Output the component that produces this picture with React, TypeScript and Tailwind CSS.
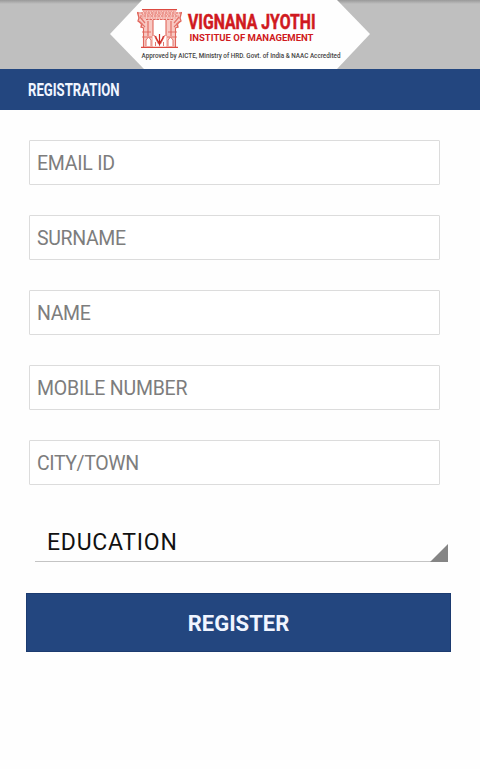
const fields = [
  { id: 'email', label: 'EMAIL ID', type: 'email', tracking: 'tracking-[-0.25px]' },
  { id: 'surname', label: 'SURNAME', type: 'text', tracking: 'tracking-[-0.35px]' },
  { id: 'name', label: 'NAME', type: 'text', tracking: 'tracking-[-0.35px]' },
  { id: 'mobile', label: 'MOBILE NUMBER', type: 'tel', tracking: 'tracking-[-0.22px]' },
  { id: 'city', label: 'CITY/TOWN', type: 'text', tracking: 'tracking-[-0.4px]' },
];

function Emblem() {
  return (
    <g transform="translate(137 9)" fill="none" stroke="#e0665c">
      {/* lintel and pillar bodies */}
      <path d="M5 0H40L39 3H44.5L41 19L38 17V38H29V11H16V38H7V17L4 19L0 3H6Z" fill="#f8c9c3" stroke="none" />
      <path d="M5 0.6H40" strokeWidth="1.2" stroke="#dc4a41" />
      <path d="M0 4H45M3 7H42M9 10.5H36" strokeWidth="1" strokeDasharray="2.5 1" />
      <path d="M6 2.3H39M5 5.5H40M5 9H40" stroke="#ee9289" strokeWidth="1" strokeDasharray="1.5 1" />
      {/* brackets */}
      <path d="M0.5 3L2 9L1 12L5 15L4 18L7 19M44.5 3L43 9L44 12L40 15L41 18L38 19" strokeWidth="1.3" />
      <path d="M3 8L8 14M42 8L37 14M2 12L8 18M43 12L37 18" stroke="#e4736a" strokeWidth="1.2" />
      {/* pillars */}
      <path d="M6.5 19V38M11 12V27M16 11V27M29 11V27M34 12V27M38.5 19V38" strokeWidth="1.1" />
      <path d="M5 23H14M31 23H40M5 28H15M30 28H40" strokeWidth="0.9" />
      <path d="M9 37V31L11.5 28L14 31V37M31 37V31L33.5 28L36 31V37" strokeWidth="0.9" fill="#fff" />
      <path d="M4 38.3H41" strokeWidth="1.2" stroke="#dc4a41" />
      {/* opening with the sprout */}
      <path d="M17 11H28V27L25 36H20L17 27Z" fill="#fff" stroke="none" />
      <path d="M17 26L21.5 35M28 26L23.5 35M18.5 37V33M26.5 37V33" strokeWidth="0.9" />
      <path d="M18.5 27C19.5 31 21.5 32 22.5 35.5C23.5 32 25.5 31 26.5 27M22.5 25V36" stroke="#cf2a24" strokeWidth="1.2" />
    </g>
  );
}

function Banner() {
  return (
    <header className="h-[69px] bg-[#bfbfbf]">
      <svg width="480" height="69" viewBox="0 0 480 69" className="block font-['Roboto',sans-serif]">
        <defs>
          <linearGradient id="topShade" x1="0" y1="0" x2="0" y2="1">
            <stop offset="0" stopColor="#999" />
            <stop offset="1" stopColor="#bfbfbf" />
          </linearGradient>
        </defs>
        <rect width="480" height="4" fill="url(#topShade)" />
        <path d="M142 0H337L370 34L337 69H144L110 34Z" fill="#fefefe" />
        <Emblem />
        <text
          x="188"
          y="28.5"
          fontSize="19.5"
          fontWeight="700"
          fill="#d01920"
          stroke="#d01920"
          strokeWidth="0.5"
          textLength="127.5"
          lengthAdjust="spacingAndGlyphs"
        >
          VIGNANA JYOTHI
        </text>
        <text x="189.5" y="41" fontSize="9.6" fontWeight="700" fill="#d01920" textLength="124" lengthAdjust="spacingAndGlyphs">
          INSTITUE OF MANAGEMENT
        </text>
        <text x="141.5" y="58.3" fontSize="7" fontWeight="500" fill="#444" textLength="199" lengthAdjust="spacingAndGlyphs">
          Approved by AICTE, Ministry of HRD. Govt. of India &amp; NAAC Accredited
        </text>
      </svg>
    </header>
  );
}

export default function App() {
  return (
    <div className="w-[480px] h-[769px] overflow-hidden bg-[#fefefe] font-['Roboto',sans-serif]">
      <Banner />
      <div className="flex h-[41px] items-center bg-[#23467f] pl-7">
        <h1 className="origin-left scale-x-[0.73] text-[18px] font-bold leading-none text-[#f0f5ff]">REGISTRATION</h1>
      </div>
      <form className="pt-[30px]">
        <div className="flex flex-col gap-[30px] pl-[29px]">
          {fields.map((field) => (
            <input
              key={field.id}
              type={field.type}
              aria-label={field.label}
              placeholder={field.label}
              className={`h-[45px] w-[411px] rounded-[1px] border border-[#dcdcdc] bg-white px-[7px] pt-0.5 text-[19.5px] outline-none placeholder:text-[#7d7d7d] ${field.tracking}`}
            />
          ))}
        </div>
        <button
          type="button"
          className="ml-[35px] mt-[37px] flex h-10 w-[413px] items-end justify-between border-b border-[#c4c4c4]"
        >
          <span className="pb-[5px] pl-3 text-[23px] leading-[27px] tracking-[0.75px] text-[#111]">EDUCATION</span>
          <svg width="18" height="18" viewBox="0 0 18 18" className="-mb-px">
            <path d="M18 0V18H0Z" fill="#858585" />
          </svg>
        </button>
        <button
          type="button"
          className="ml-[26px] mt-[31px] block h-[59px] w-[425px] border border-[#1c3b70] bg-[#23467f] pt-0.5 text-[22px] font-bold text-[#f0f5ff]"
        >
          REGISTER
        </button>
      </form>
    </div>
  );
}
